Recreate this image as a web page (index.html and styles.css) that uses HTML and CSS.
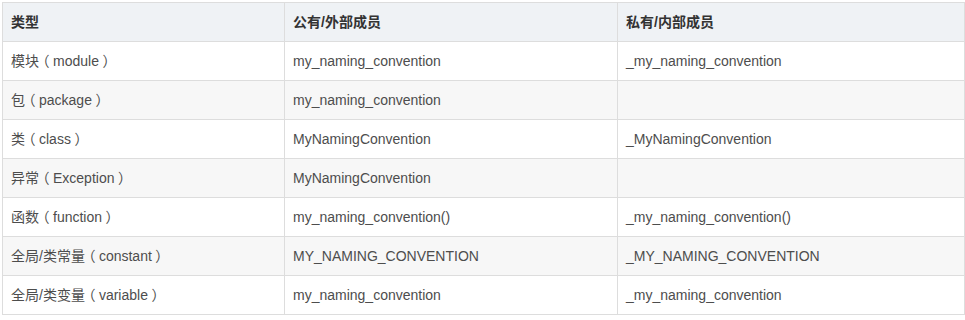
FILE: index.html
```html
<!DOCTYPE html>
<html lang="zh">
<head>
<meta charset="utf-8">
<link rel="stylesheet" href="styles.css">
</head>
<body>
<table class="naming">
  <colgroup>
    <col class="c1"><col class="c2"><col class="c3">
  </colgroup>
  <thead>
    <tr><th>类型</th><th>公有/外部成员</th><th>私有/内部成员</th></tr>
  </thead>
  <tbody>
    <tr><td>模块<span class="p">（</span>module<span class="p">）</span></td><td>my_naming_convention</td><td>_my_naming_convention</td></tr>
    <tr><td>包<span class="p">（</span>package<span class="p">）</span></td><td>my_naming_convention</td><td></td></tr>
    <tr><td>类<span class="p">（</span>class<span class="p">）</span></td><td>MyNamingConvention</td><td>_MyNamingConvention</td></tr>
    <tr><td>异常<span class="p">（</span>Exception<span class="p">）</span></td><td>MyNamingConvention</td><td></td></tr>
    <tr><td>函数<span class="p">（</span>function<span class="p">）</span></td><td>my_naming_convention()</td><td>_my_naming_convention()</td></tr>
    <tr><td>全局/类常量<span class="p">（</span>constant<span class="p">）</span></td><td>MY_NAMING_CONVENTION</td><td>_MY_NAMING_CONVENTION</td></tr>
    <tr><td>全局/类变量<span class="p">（</span>variable<span class="p">）</span></td><td>my_naming_convention</td><td>_my_naming_convention</td></tr>
  </tbody>
</table>
</body>
</html>
```
FILE: styles.css
```css
html, body {
  margin: 0;
  padding: 0;
  background: #fff;
}
body {
  padding: 2px;
  font-family: "Liberation Sans", "Noto Sans CJK SC", sans-serif;
  font-size: 14px;
  color: #4d4d4d;
}
.naming {
  border-collapse: collapse;
  width: 962px;
  table-layout: fixed;
}
.c1 { width: 282px; }
.c2 { width: 333px; }
.c3 { width: 347px; }
.naming th,
.naming td {
  border: 1px solid #dddddd;
  padding: 8px 8px;
  line-height: 22px;
  height: 22px;
  text-align: left;
  vertical-align: middle;
  white-space: nowrap;
}
.naming th {
  background: #eff2f5;
  font-weight: bold;
  color: #333;
}
.naming tbody tr:nth-child(even) td {
  background: #f7f7f7;
}
.p {
  display: inline-block;
  width: 14px;
  text-align: center;
  font-feature-settings: "halt";
}
```
